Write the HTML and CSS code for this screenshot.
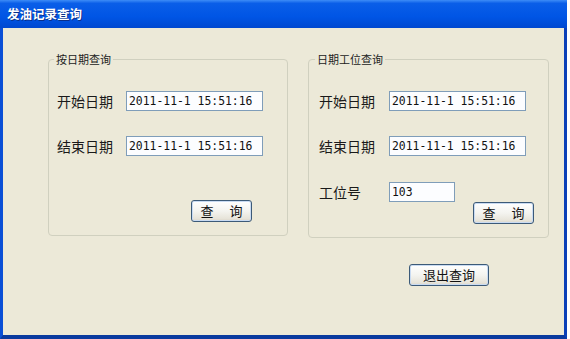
FILE: index.html
```html
<!DOCTYPE html>
<html lang="zh-CN">
<head>
    <meta charset="utf-8">
    <link rel="stylesheet" href="styles.css">
</head>
<body>
    <div class="window">
        <div class="titlebar">发油记录查询</div>
        <div class="client">
            <div class="groups">
                <fieldset class="group group-left">
                    <legend>按日期查询</legend>
                    <div class="field">
                        <label>开始日期</label>
                        <input type="text" class="date" value="2011-11-1 15:51:16">
                    </div>
                    <div class="field">
                        <label>结束日期</label>
                        <input type="text" class="date" value="2011-11-1 15:51:16">
                    </div>
                    <div class="actions">
                        <button type="button" class="btn btn-query">查 询</button>
                    </div>
                </fieldset>
                <fieldset class="group group-right">
                    <legend>日期工位查询</legend>
                    <div class="field">
                        <label>开始日期</label>
                        <input type="text" class="date" value="2011-11-1 15:51:16">
                    </div>
                    <div class="field">
                        <label>结束日期</label>
                        <input type="text" class="date" value="2011-11-1 15:51:16">
                    </div>
                    <div class="field field-station">
                        <label>工位号</label>
                        <input type="text" class="station" value="103">
                    </div>
                    <div class="actions">
                        <button type="button" class="btn btn-query">查 询</button>
                    </div>
                </fieldset>
            </div>
            <div class="footer">
                <button type="button" class="btn btn-exit">退出查询</button>
            </div>
        </div>
    </div>
</body>
</html>
```

FILE: styles.css
```css
    /* Page and window frame */
    body {
        margin: 0;
        background: #fff;
        font-family: "Noto Sans CJK SC", "Liberation Sans", sans-serif;
    }

    .window {
        width: 567px;
        height: 339px;
        box-sizing: border-box;
        background: #ece9d8;
        border-left: 3px solid #0a4fd6;
        border-right: 3px solid #0a3fb8;
        border-bottom: 4px solid #0a3a9e;
    }

    .titlebar {
        height: 28px;
        margin-left: -3px;
        margin-right: -3px;
        padding-left: 7px;
        line-height: 28px;
        color: #fff;
        font-size: 12.5px;
        font-weight: bold;
        background: linear-gradient(#3d8cf7 0%, #0a5ee8 12%, #0055e5 60%, #0048d0 100%);
        text-shadow: 1px 1px 0 #0a2f8a;
    }

    .client {
        padding: 24px 0 0 45px;
    }

    /* Group boxes */
    .groups {
        display: flex;
        align-items: flex-start;
        gap: 20px;
    }

    .group {
        margin: 0;
        border: 1px solid #d0d0bf;
        border-radius: 4px;
        box-sizing: border-box;
    }

    .group legend {
        font-size: 11px;
        line-height: 14px;
        padding: 0 2px;
        color: #222;
    }

    .group-left {
        width: 240px;
        padding: 0 8px 13px 8px;
    }

    .group-left legend {
        margin-left: -3px;
    }

    .group-right {
        width: 241px;
        padding: 0 10px 13px 10px;
    }

    .group-right legend {
        margin-left: -4px;
    }

    /* Label + input rows */
    .field {
        display: flex;
        align-items: center;
        height: 20px;
        margin-top: 25px;
    }

    .field-station {
        margin-top: 26px;
    }

    .field label {
        width: 69px;
        font-size: 14px;
        line-height: 20px;
        color: #1a1a1a;
    }

    .group-right .field label {
        width: 70px;
    }

    input {
        height: 20px;
        box-sizing: border-box;
        margin: 0;
        padding: 0 2px;
        border: 1px solid #7f9db9;
        background: #fcfdff;
        font-family: "DejaVu Sans Mono", "Liberation Mono", monospace;
        font-size: 11.4px;
        color: #111;
    }

    .date {
        width: 137px;
    }

    .station {
        width: 66px;
    }

    /* Buttons */
    .actions {
        display: flex;
        justify-content: flex-end;
    }

    .group-left .actions {
        margin-top: 44px;
        padding-right: 27px;
    }

    .group-right .actions {
        padding-right: 4px;
    }

    .btn {
        height: 22px;
        box-sizing: border-box;
        padding: 0;
        border: 1px solid #3c5a78;
        border-radius: 3px;
        background: linear-gradient(#ffffff 0%, #f4f4f0 50%, #e6e3d8 90%, #d6d0c5 100%);
        box-shadow: inset 0 0 0 1px #c9dbf2;
        font-family: "Noto Sans CJK SC", sans-serif;
        font-size: 13px;
        line-height: 20px;
        color: #111;
    }

    .btn-query {
        width: 61px;
        word-spacing: 13px;
    }

    .footer {
        margin-top: 23px;
        padding-left: 361px;
    }

    .btn-exit {
        width: 80px;
    }
```
